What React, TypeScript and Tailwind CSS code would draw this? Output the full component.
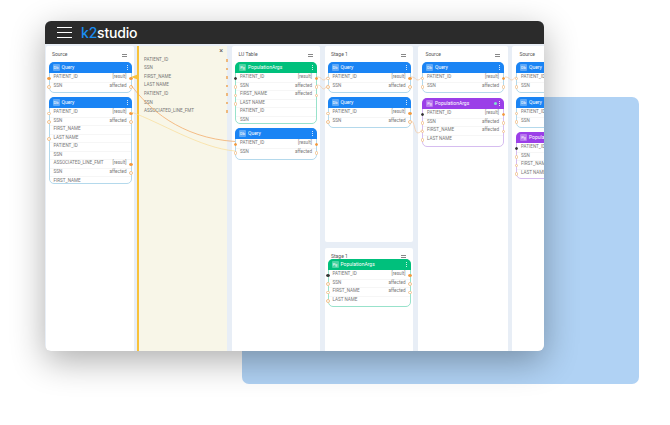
import React from 'react';

type Dot = 'fill' | 'open' | 'black' | 'none';
type Row = { label: string; right?: string; l?: Dot; r?: Dot };
type Tone = 'blue' | 'green' | 'purple';

const tones = {
  blue: { head: 'bg-[#1a84f4]', border: 'border-[#b4d9ec]', tag: 'Db' },
  green: { head: 'bg-[#00c07c]', border: 'border-[#98e2cb]', tag: 'Pg' },
  purple: { head: 'bg-[#9b3fe8]', border: 'border-[#d6bdf0]', tag: 'Pg' },
};

const dotClass = (d: Dot) => {
  if (d === 'fill') return 'bg-[#f49a3e] border-[#f49a3e]';
  if (d === 'black') return 'bg-[#333] border-[#333]';
  if (d === 'open') return 'bg-white border-[#f3c38f]';
  return 'hidden';
};

const Card = ({ tone, title, rows, dotted, size = 'h-[31px]' }: { tone: Tone; title: string; rows: Row[]; dotted?: boolean; size?: string }) => {
  const t = tones[tone];
  return (
    <div className={`relative bg-white border rounded-[5px] ${size} ${t.border}`}>
      <div className={`flex items-center h-[11px] -mx-px -mt-px mb-[1px] rounded-t-[5px] px-[4px] text-white ${t.head}`}>
        <span className="w-[7px] h-[7px] rounded-[1px] bg-white/30 text-[4px] leading-[7px] text-center shrink-0">{t.tag}</span>
        <span className="ml-[2px] text-[5px] leading-none whitespace-nowrap">{title}</span>
        {dotted && <span className="ml-auto mr-[2px] w-[3px] h-[3px] rounded-full bg-[#7fe3d0]" />}
        <span className={`flex flex-col gap-[1px] ${dotted ? '' : 'ml-auto'}`}>
          <i className="block w-[1px] h-[1px] bg-white/80" />
          <i className="block w-[1px] h-[1px] bg-white/80" />
          <i className="block w-[1px] h-[1px] bg-white/80" />
        </span>
      </div>
      {rows.map((r, i) => (
        <div key={i} className="relative flex items-center justify-between h-[8.5px] px-[4px] border-b border-[#f6f6f6] last:border-b-0 text-[4.6px] leading-none text-[#777]">
          <span className="whitespace-nowrap">{r.label}</span>
          {r.right && <span className="whitespace-nowrap">{r.right}</span>}
          <span className={`absolute left-[-2.25px] top-[2.5px] w-[3.5px] h-[3.5px] rounded-full border-[0.5px] ${dotClass(r.l ?? 'none')}`} />
          <span className={`absolute right-[-2.25px] top-[2.5px] w-[3.5px] h-[3.5px] rounded-full border-[0.5px] ${dotClass(r.r ?? 'none')}`} />
        </div>
      ))}
    </div>
  );
};

const ColHead = ({ title }: { title: string }) => (
  <div className="flex items-center justify-between h-[16px] pt-[2px] px-[3.5px] text-[5px] text-[#555]">
    <span>{title}</span>
    <span className="flex flex-col gap-[1px] mr-[1px]">
      <i className="block w-[5px] h-[1px] bg-[#888]" />
      <i className="block w-[5px] h-[1px] bg-[#888]" />
    </span>
  </div>
);

const shortRows: Row[] = [
  { label: 'PATIENT_ID', right: '[result]', l: 'open', r: 'fill' },
  { label: 'SSN', right: 'affected', l: 'open', r: 'open' },
];

const pgRows: Row[] = [
  { label: 'PATIENT_ID', right: '[result]', l: 'black', r: 'fill' },
  { label: 'SSN', right: 'affected', l: 'open', r: 'open' },
  { label: 'FIRST_NAME', right: 'affected', l: 'open', r: 'open' },
  { label: 'LAST NAME', l: 'open' },
];

const longRows: Row[] = [
  { label: 'PATIENT_ID', right: '[result]', l: 'open', r: 'fill' },
  { label: 'SSN', right: 'affected', l: 'open', r: 'open' },
  { label: 'FIRST_NAME' },
  { label: 'LAST NAME', l: 'open' },
  { label: 'PATIENT_ID' },
  { label: 'SSN' },
  { label: 'ASSOCIATED_LINE_FMT', right: '[result]', r: 'fill' },
  { label: 'SSN', right: 'affected', r: 'open' },
  { label: 'FIRST_NAME' },
];

const luRows: Row[] = [
  ...pgRows,
  { label: 'PATIENT_ID' },
  { label: 'SSN' },
];

const creamRows = ['PATIENT_ID', 'SSN', 'FIRST_NAME', 'LAST NAME', 'PATIENT_ID', 'SSN', 'ASSOCIATED_LINE_FMT'];

export default function App() {
  return (
    <div className="relative w-[670px] h-[425px] bg-white overflow-hidden pl-[45px] pt-[21px] font-['Roboto',sans-serif]">
      {/* blue block behind the window */}
      <div className="absolute left-[242px] top-[97px] w-[397px] h-[287px] rounded-[7px] bg-[#b0d2f4]" />

      <div className="relative w-[499px] h-[330px] rounded-[6px] overflow-hidden bg-[#e8eef6] flex flex-col">
        <div className="flex items-center h-[23px] bg-[#2b2b2b] shrink-0">
          <div className="ml-[12px] flex flex-col gap-[3.5px]">
            <i className="block w-[15px] h-[1.5px] bg-white" />
            <i className="block w-[15px] h-[1.5px] bg-white" />
            <i className="block w-[15px] h-[1.5px] bg-white" />
          </div>
          <div className="ml-[9px] text-[14px] leading-none tracking-[-0.2px] font-['Inter',sans-serif]">
            <span className="text-[#1a8cf0] font-medium">k2</span>
            <span className="text-white font-medium">studio</span>
          </div>
        </div>

        <div className="flex flex-1 pt-[2px] min-h-0">
          <div className="ml-px w-[88px] bg-white rounded-t-[2px] px-[2.5px] shrink-0">
            <ColHead title="Source" />
            <div className="flex flex-col gap-[4px]">
              <Card tone="blue" title="Query" rows={[{ ...shortRows[0], l: 'fill' }, shortRows[1]]} />
              <Card tone="blue" title="Query" rows={longRows} size="h-[87px]" />
            </div>
          </div>

          <div className="ml-[3px] w-[90px] bg-[#f8f6e8] border-l-2 border-[#f8c23a] shrink-0 relative pt-[10px]">
            <span className="absolute right-[4px] top-[2px] text-[7px] leading-none text-[#555]">×</span>
            {creamRows.map((label, i) => (
              <div key={i} className="flex items-center justify-between h-[8.55px] pl-[5px] text-[4.6px] text-[#777]">
                <span>{label}</span>
                <i className="block w-[2.5px] h-[2.5px] -mr-[1px] border-[0.5px] border-[#eeb87c]" />
              </div>
            ))}
          </div>

          <div className="ml-[5px] w-[88px] bg-white rounded-t-[2px] px-[3px] shrink-0">
            <ColHead title="LU Table" />
            <div className="flex flex-col gap-[4px]">
              <Card tone="green" title="PopulationArgs" rows={luRows} size="h-[62px]" />
              <Card tone="blue" title="Query" rows={[{ ...shortRows[0], l: 'fill' }, shortRows[1]]} size="h-[32px]" />
            </div>
          </div>

          <div className="ml-[5px] w-[88px] flex flex-col gap-[6px] shrink-0">
            <div className="h-[196px] bg-white px-[2.5px] rounded-[2px]">
              <ColHead title="Stage 1" />
              <div className="flex flex-col gap-[4px]">
                <Card tone="blue" title="Query" rows={shortRows} />
                <Card tone="blue" title="Query" rows={shortRows} />
              </div>
            </div>
            <div className="flex-1 bg-white px-[2.5px] rounded-t-[2px]">
              <div className="flex items-end justify-between h-[11px] px-[3.5px] text-[5px] leading-none text-[#555]">
                <span>Stage 1</span>
                <span className="flex flex-col gap-[1px] mb-[1px] mr-[1px]">
                  <i className="block w-[5px] h-[1px] bg-[#888]" />
                  <i className="block w-[5px] h-[1px] bg-[#888]" />
                </span>
              </div>
              <Card tone="green" title="PopulationArgs" rows={pgRows} size="h-[48px]" />
            </div>
          </div>

          <div className="ml-[5px] w-[90px] bg-white rounded-t-[2px] px-[4px] shrink-0">
            <ColHead title="Source" />
            <div className="flex flex-col gap-[5px]">
              <Card tone="blue" title="Query" rows={shortRows} />
              <Card tone="purple" title="PopulationArgs" rows={pgRows} dotted size="h-[49px]" />
            </div>
          </div>

          <div className="ml-[4px] w-[90px] bg-white rounded-t-[2px] px-[4px] shrink-0">
            <ColHead title="Source" />
            <div className="flex flex-col gap-[4px]">
              <Card tone="blue" title="Query" rows={shortRows} />
              <Card tone="blue" title="Query" rows={shortRows} />
              <Card tone="purple" title="PopulationArgs" rows={pgRows} size="h-[47px]" />
            </div>
          </div>
        </div>

        {/* connectors between fields */}
        <svg className="absolute inset-0 pointer-events-none" width="499" height="330" viewBox="45 21 499 330" fill="none">
          <path d="M131 77 L139 74 V80 Z" fill="#f8c23a" />
          <path d="M131 85 C148 108 180 138 235 141.5" stroke="#f2a45c" strokeWidth="0.7" />
          <path d="M131 112 C160 122 200 148 235 151" stroke="#f9dc96" strokeWidth="0.7" />
          <path d="M317 77 C322 77 321 80 324 80 C326 80 326 77 328 77" stroke="#f3c9a0" strokeWidth="0.7" />
          <path d="M317 85 C322 85 321 89 324 89 C326 89 326 85 328 85" stroke="#f3c9a0" strokeWidth="0.7" />
          <path d="M411 77 C416 77 415 80 418 80 C421 80 420 77 423 77" stroke="#f3c9a0" strokeWidth="0.7" />
          <path d="M411 121 C415 121 414 133 418 133 C421 133 421 129 423 129" stroke="#f3c9a0" strokeWidth="0.7" />
          <path d="M505 77 C510 77 509 80 512 80 C514 80 514 77 516 77" stroke="#f3c9a0" strokeWidth="0.7" />
        </svg>
      </div>

      {/* soft shadow thrown over the blue block */}
      <div className="absolute left-[45px] top-[21px] w-[499px] h-[330px] rounded-[6px] shadow-[0_10px_34px_rgba(0,0,0,0.32)] pointer-events-none" />
    </div>
  );
}
